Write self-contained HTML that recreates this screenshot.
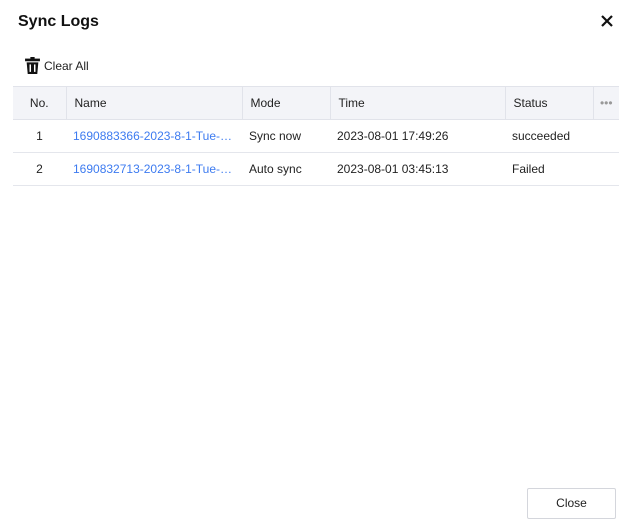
<!DOCTYPE html><html><head><style>
body{margin:0;width:632px;height:530px;background:#fff;font-family:"Liberation Sans",sans-serif;font-size:12px;color:#222;position:relative;overflow:hidden}
.t{position:absolute;left:18px;top:13px;font-size:16px;font-weight:bold;color:#111}
.x{position:absolute;left:600px;top:14px}
.clr{position:absolute;left:25px;top:57px;display:flex;align-items:center;gap:4px;font-size:12px}
table{position:absolute;left:13px;top:86px;width:606px;border-collapse:collapse;table-layout:fixed}
th{background:#f3f4f8;font-weight:normal;text-align:left;height:32px;padding:0 0 0 8px;border-top:1px solid #e1e3ea;border-bottom:1px solid #e1e3ea;border-left:1px solid #e1e3ea;color:#222}
th:first-child{border-left:none;text-align:center;padding:0}
td{height:32px;padding:0 0 0 7px;border-bottom:1px solid #e4e6ec;white-space:nowrap;overflow:hidden}
td:first-child{text-align:center;padding:0}
a{color:#3d7bf0;text-decoration:none}
.btn{position:absolute;left:527px;top:488px;width:89px;height:31px;border:1px solid #d4d6dc;border-radius:2px;box-sizing:border-box;text-align:center;line-height:29px;font-size:12px}
</style></head><body>
<div class="t">Sync Logs</div>
<svg class="x" width="14" height="14" viewBox="0 0 14 14"><path d="M2 2L12 12M12 2L2 12" stroke="#111" stroke-width="2.2"/></svg>
<div class="clr"><svg width="15" height="17" viewBox="0 0 14 16"><rect x="0" y="1.5" width="14" height="2.5" fill="#111"/><rect x="5" y="0" width="4" height="2" fill="#111"/><path d="M1.5 5h11l-1 11h-9z" fill="#111"/><rect x="4.2" y="7" width="1.4" height="7" fill="#fff"/><rect x="8.4" y="7" width="1.4" height="7" fill="#fff"/></svg><span>Clear All</span></div>
<table>
<colgroup><col style="width:53px"><col style="width:176px"><col style="width:88px"><col style="width:175px"><col style="width:88px"><col style="width:26px"></colgroup>
<tr><th>No.</th><th>Name</th><th>Mode</th><th>Time</th><th>Status</th><th style="color:#999;text-align:center;padding:0">•••</th></tr>
<tr><td>1</td><td><a>1690883366-2023-8-1-Tue-…</a></td><td>Sync now</td><td>2023-08-01 17:49:26</td><td>succeeded</td><td></td></tr>
<tr><td>2</td><td><a>1690832713-2023-8-1-Tue-…</a></td><td>Auto sync</td><td>2023-08-01 03:45:13</td><td>Failed</td><td></td></tr>
</table>
<div class="btn">Close</div>
</body></html>
